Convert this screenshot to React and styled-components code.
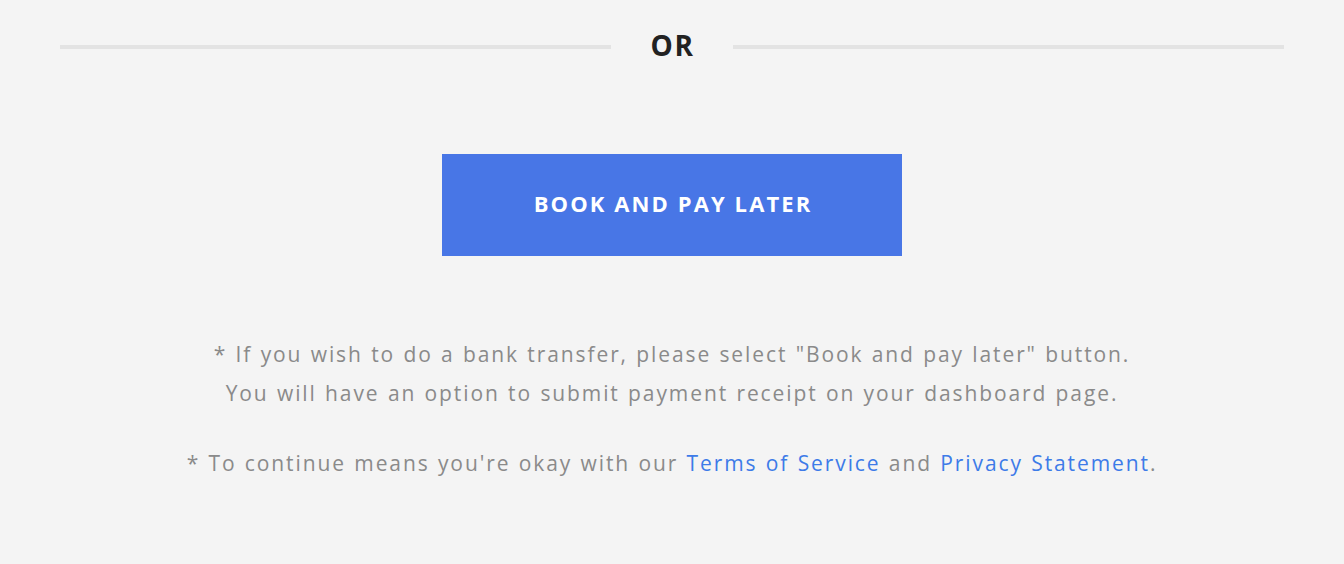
import React from 'react';
import styled, {createGlobalStyle} from 'styled-components';

const GlobalStyle = createGlobalStyle`
  html, body {
    margin: 0;
    padding: 0;
    background: #f4f4f4;
  }
  body {
    font-family: "Open Sans", "Noto Sans", sans-serif;
  }
`;

const Root = styled.div`
  width: 1344px;
  height: 564px;
  box-sizing: border-box;
  padding: 24px 60px 0;
  display: flex;
  flex-direction: column;
  align-items: center;
`;

const Divider = styled.div`
  width: 100%;
  display: flex;
  align-items: center;
  gap: 39px;

  &::before, &::after {
    content: "";
    flex: 1;
    height: 4px;
    background: #e3e3e3;
    margin-top: 3px;
  }
`;

const DividerLabel = styled.span`
  font-size: 28px;
  font-weight: 700;
  color: #222;
  line-height: 42px;
  letter-spacing: 1.5px;
  padding-left: 1px;
`;

const BookButton = styled.button`
  margin-top: 88px;
  width: 460px;
  height: 102px;
  border: none;
  border-radius: 0;
  background: #4876e6;
  color: #fff;
  font-family: inherit;
  font-size: 22px;
  font-weight: 700;
  letter-spacing: 2.1px;
  text-transform: uppercase;
  padding: 0 0 4px 2px;
  cursor: pointer;
`;

const Notes = styled.div`
  margin-top: 79px;
  display: flex;
  flex-direction: column;
  align-items: center;
  gap: 31px;
`;

const Note = styled.p`
  margin: 0;
  font-size: 21px;
  line-height: 39px;
  letter-spacing: 1.9px;
  word-spacing: 1px;
  color: #8a8a8a;
  text-align: center;
`;

const TextLink = styled.a`
  color: #3d7be8;
  text-decoration: none;
`;

export default function App() {
    return (
        <>
            <GlobalStyle/>
            <Root>
                <Divider>
                    <DividerLabel>OR</DividerLabel>
                </Divider>
                <BookButton>Book and pay later</BookButton>
                <Notes>
                    <Note>
                        * If you wish to do a bank transfer, please select "Book and pay later" button.
                        <br/>
                        You will have an option to submit payment receipt on your dashboard page.
                    </Note>
                    <Note>
                        * To continue means you're okay with our <TextLink href="#">Terms of Service</TextLink> and <TextLink href="#">Privacy Statement</TextLink>.
                    </Note>
                </Notes>
            </Root>
        </>
    );
}
